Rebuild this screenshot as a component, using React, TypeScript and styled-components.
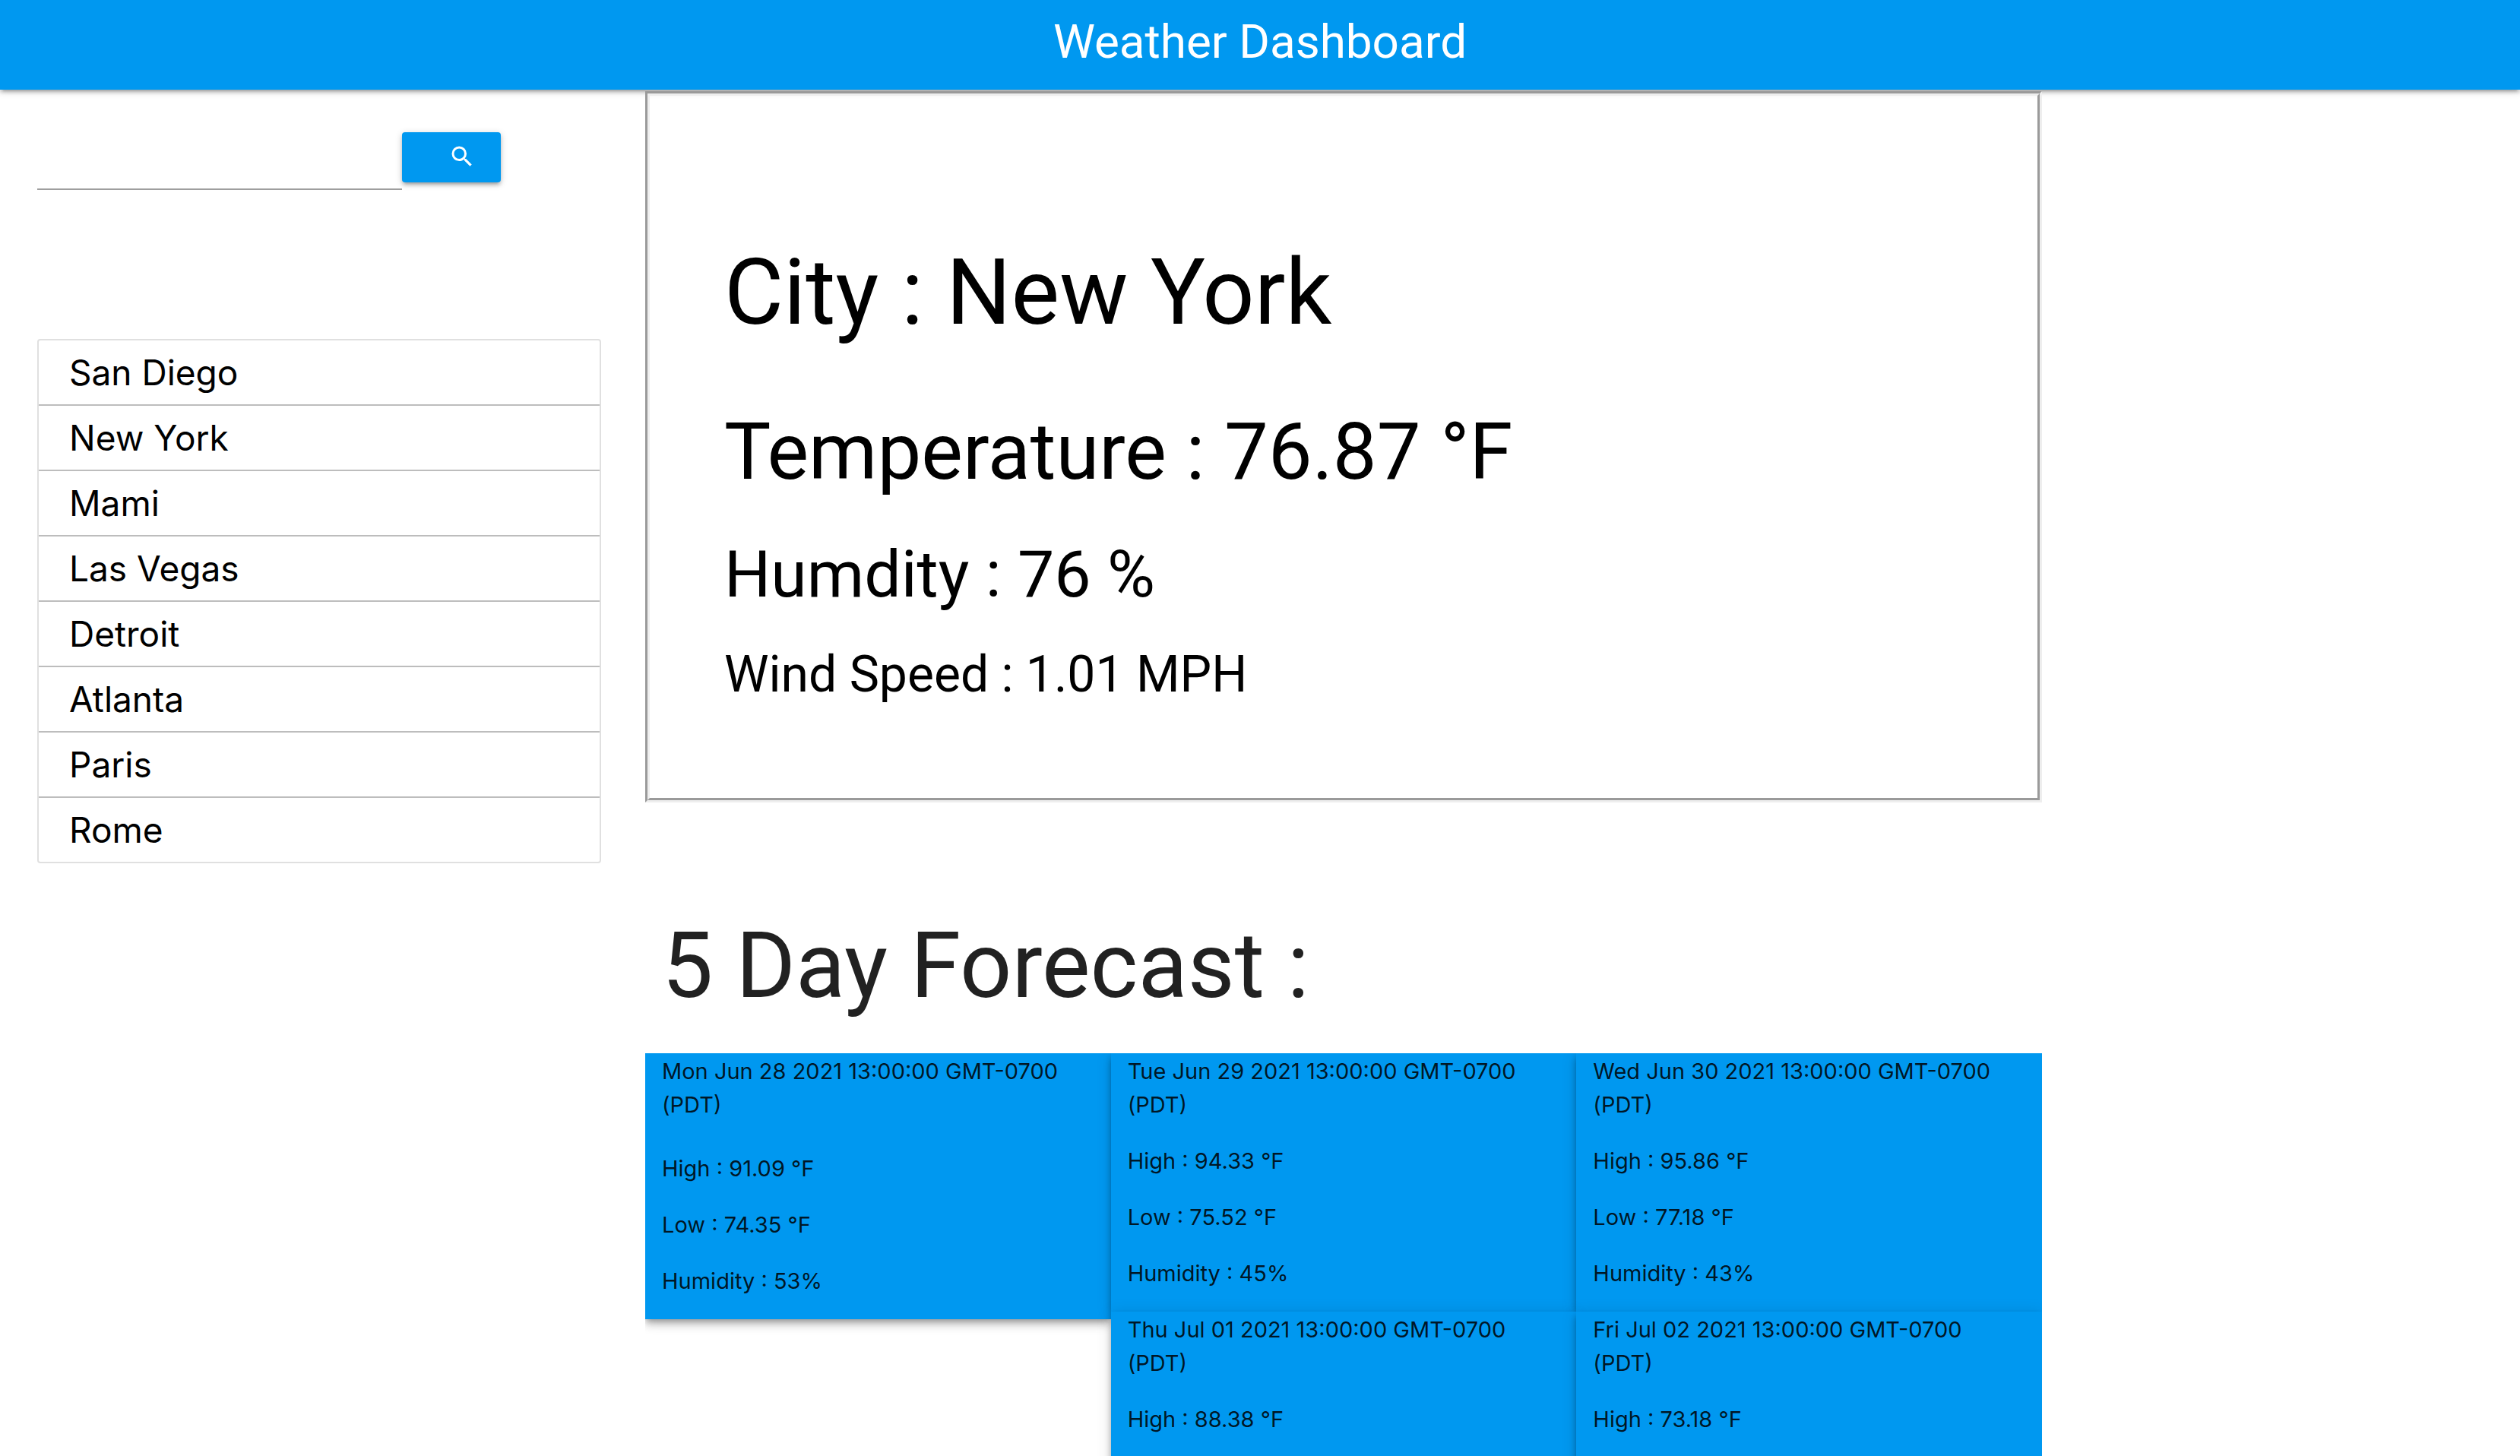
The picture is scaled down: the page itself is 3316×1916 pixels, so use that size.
import React from "react";
import styled, { createGlobalStyle } from "styled-components";
import { MdSearch } from "react-icons/md";

const BLUE = "#0098f0";
const DISPLAY = 'Roboto, "Open Sans", "Liberation Sans", sans-serif';
const RAISED =
  "0 4px 4px 0 rgba(0,0,0,.14), 0 6px 2px -4px rgba(0,0,0,.12), 0 2px 10px 0 rgba(0,0,0,.2)";
const RAISED_HIGH =
  "0 8px 10px 0 rgba(0,0,0,.14), 0 2px 20px 0 rgba(0,0,0,.12), 0 4px 8px -2px rgba(0,0,0,.3)";

const GlobalStyle = createGlobalStyle`
  *, *::before, *::after { box-sizing: border-box; }
  body {
    margin: 0;
    background: #fff;
    color: rgba(0, 0, 0, 0.87);
    font-family: Inter, "Open Sans", "Liberation Sans", sans-serif;
    font-size: 29px;
    line-height: 44px;
  }
  h1, h2, h3, h4, p, ul { margin: 0; padding: 0; font-weight: 400; }
  h1, h2, h3, h4 { font-family: ${DISPLAY}; }
`;

const Header = styled.header`
  padding-bottom: 8px;
  background: ${BLUE};
  box-shadow: ${RAISED};
  color: #fff;
  text-align: center;
`;

const Title = styled.h1`
  font-size: 62px;
  line-height: 110px;
`;

const Layout = styled.div`
  display: grid;
  grid-template-columns: 849fr 1838fr 629fr;
  align-items: start;
`;

const Sidebar = styled.aside`
  padding: 44px 58px 0 49px;
`;

const SearchForm = styled.form`
  display: flex;
  align-items: flex-start;
`;

const SearchInput = styled.input`
  width: 480px;
  height: 88px;
  padding: 0;
  border: 0;
  border-bottom: 2px solid #9e9e9e;
  background: transparent;
  font: inherit;
  outline: none;
`;

const SearchButton = styled.button`
  display: flex;
  align-items: center;
  justify-content: flex-end;
  width: 130px;
  height: 66px;
  margin-top: 12px;
  padding: 0 33px 2px;
  border: 0;
  border-radius: 4px;
  background: ${BLUE};
  box-shadow: ${RAISED};
  color: #fff;
  font-size: 36px;
  cursor: pointer;
`;

const History = styled.ul`
  margin-top: 196px;
  border: 2px solid #e0e0e0;
  border-radius: 4px;
  list-style: none;
`;

const HistoryItem = styled.li`
  & + & { border-top: 2px solid #bdbdbd; }
`;

const HistoryButton = styled.button`
  display: block;
  width: 100%;
  padding: 0 40px;
  border: 0;
  background: none;
  color: #000;
  font-family: inherit;
  font-size: 46px;
  line-height: 84px;
  text-align: left;
  cursor: pointer;
`;

const Current = styled.section`
  margin-top: 2px;
  padding: 190px 98px 124px;
  border: 6px groove #eee;
  color: #000;
`;

const City = styled.h1`
  font-size: 120px;
  line-height: 138px;
`;

const Temperature = styled.h2`
  margin-top: 82px;
  font-size: 103px;
  line-height: 118px;
`;

const Humidity = styled.h3`
  margin-top: 54px;
  font-size: 86px;
  line-height: 96px;
`;

const Wind = styled.h4`
  margin-top: 46px;
  font-size: 66px;
  line-height: 76px;
`;

const ForecastTitle = styled.h2`
  padding: 146px 22px 46px;
  font-size: 120px;
  line-height: 138px;
`;

const Days = styled.div`
  display: grid;
  grid-template-columns: repeat(3, 1fr);
  grid-template-rows: repeat(2, 340px);
  overflow: hidden;
`;

const Day = styled.article<{ $tall?: boolean }>`
  display: flex;
  flex-direction: column;
  gap: 30px;
  grid-row: ${(p) => (p.$tall ? "1 / span 2" : "auto")};
  align-self: ${(p) => (p.$tall ? "start" : "stretch")};
  padding: 2px 22px 28px;
  background: ${BLUE};
  box-shadow: ${RAISED_HIGH};
`;

const DayDate = styled.p<{ $tall?: boolean }>`
  padding-bottom: ${(p) => (p.$tall ? "10px" : "0")};
`;

const cities = ["San Diego", "New York", "Mami", "Las Vegas", "Detroit", "Atlanta", "Paris", "Rome"];

const days = [
  { date: "Mon Jun 28 2021 13:00:00 GMT-0700 (PDT)", high: "91.09", low: "74.35", humidity: 53 },
  { date: "Tue Jun 29 2021 13:00:00 GMT-0700 (PDT)", high: "94.33", low: "75.52", humidity: 45 },
  { date: "Wed Jun 30 2021 13:00:00 GMT-0700 (PDT)", high: "95.86", low: "77.18", humidity: 43 },
  { date: "Thu Jul 01 2021 13:00:00 GMT-0700 (PDT)", high: "88.38" },
  { date: "Fri Jul 02 2021 13:00:00 GMT-0700 (PDT)", high: "73.18" },
];

export default function App() {
  return (
    <>
      <GlobalStyle />
      <Header>
        <Title>Weather Dashboard</Title>
      </Header>
      <Layout>
        <Sidebar>
          <SearchForm onSubmit={(e) => e.preventDefault()}>
            <SearchInput type="text" aria-label="City" />
            <SearchButton type="submit" aria-label="Search">
              <MdSearch />
            </SearchButton>
          </SearchForm>
          <History>
            {cities.map((city) => (
              <HistoryItem key={city}>
                <HistoryButton type="button">{city}</HistoryButton>
              </HistoryItem>
            ))}
          </History>
        </Sidebar>
        <main>
          <Current>
            <City>City : New York</City>
            <Temperature>Temperature : 76.87 °F</Temperature>
            <Humidity>Humdity : 76 %</Humidity>
            <Wind>Wind Speed : 1.01 MPH</Wind>
          </Current>
          <ForecastTitle>5 Day Forecast :</ForecastTitle>
          <Days>
            {days.map((day, i) => (
              <Day key={day.date} $tall={i === 0}>
                <DayDate $tall={i === 0}>{day.date}</DayDate>
                <p>High : {day.high} °F</p>
                {day.low && <p>Low : {day.low} °F</p>}
                {day.humidity && <p>Humidity : {day.humidity}%</p>}
              </Day>
            ))}
          </Days>
        </main>
      </Layout>
    </>
  );
}
